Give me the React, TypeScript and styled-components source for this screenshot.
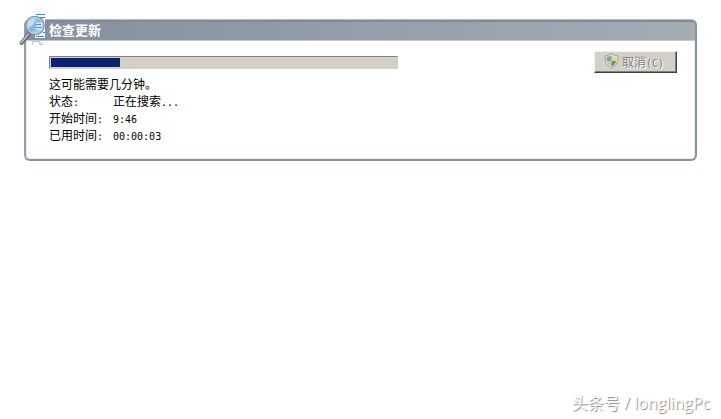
import React from "react";
import styled, { createGlobalStyle } from "styled-components";

const GlobalStyle = createGlobalStyle`
  * { box-sizing: border-box; }
  body {
    margin: 0;
    background: #fff;
    color: #000;
    font: 12px/17px "Noto Sans CJK SC", sans-serif;
  }
`;

const Page = styled.main`
  display: flex;
  flex-direction: column;
  min-height: 100vh;
  padding: 19px 24px 0;
`;

const Panel = styled.section`
  position: relative;
  border: 2px solid #87919f;
  border-top: 1px solid #b5bbc3;
  border-left-color: #949dab;
  border-radius: 6px;
  box-shadow: inset 0 0 0 1px #e8eaed;
`;

const Header = styled.header`
  height: 21px;
  padding-left: 23px;
  border-top: 2px solid #7f8b9b;
  border-bottom: 1px solid #c3c8ce;
  border-radius: 4px 4px 0 0;
  background: linear-gradient(90deg, #84909f, #a5abb3);
`;

const Title = styled.h1`
  margin: 0;
  color: #fff;
  font-size: 13px;
  line-height: 16px;
  font-weight: 700;
`;

const HeaderIcon = styled.svg`
  position: absolute;
  left: -8px;
  top: -8px;
  width: 32px;
  height: 36px;
`;

const Body = styled.div`
  display: flex;
  justify-content: space-between;
  align-items: flex-start;
  gap: 16px;
  padding: 10px 18px 16px 23px;
`;

const Status = styled.div`
  flex: 0 1 349px;
  min-width: 0;
  padding-top: 5px;
`;

const Track = styled.div`
  height: 13px;
  margin-bottom: 6px;
  padding: 1px;
  border: 1px solid #808080;
  border-right-color: #d4d0c8;
  border-bottom-color: #d4d0c8;
  background: #d4d0c8;
`;

const Fill = styled.div`
  height: 100%;
  background: #0a246a;
`;

const Note = styled.p`
  margin: 0;
`;

const Details = styled.dl`
  display: grid;
  grid-template-columns: 64px 1fr;
  grid-auto-rows: 17px;
  margin: 0;
`;

const Term = styled.dt``;

const Value = styled.dd`
  margin: 0;
`;

const Mono = styled.span`
  font-family: "DejaVu Sans Mono", monospace;
  font-size: 10px;
  line-height: 1;
`;

const CancelButton = styled.button`
  display: flex;
  flex: none;
  align-items: center;
  justify-content: center;
  gap: 3px;
  height: 22px;
  padding: 0 12px 2px 9px;
  border: 1px solid;
  border-color: #f4f2ee #404040 #404040 #f4f2ee;
  background: #d4d0c8;
  box-shadow: inset -1px -1px #808080;
  color: #808080;
  font: inherit;
  text-shadow: 1px 1px #fff;
`;

const ShieldIcon = styled.svg`
  width: 15px;
  height: 16px;
`;

const Watermark = styled.footer`
  align-self: flex-end;
  margin: auto -13px 4px 0;
  color: #fdfdfd;
  font: 16px/24px "Open Sans", "Noto Sans CJK SC", sans-serif;
  text-shadow: 1px 1px 1px #888;
`;

function SearchDocument() {
  return (
    <HeaderIcon viewBox="0 0 32 36" aria-hidden="true">
      <defs>
        <linearGradient id="lens" x1="0" y1="0" x2="1" y2="1">
          <stop offset="0" stopColor="#d5eaf8" />
          <stop offset=".5" stopColor="#86b3dc" />
          <stop offset="1" stopColor="#c7e5f5" />
        </linearGradient>
      </defs>
      <path d="M17 2h10v24H17z" fill="#fff" />
      <path d="M18 2.500h9M20 5.500h7M25 20.500h2M18 24.500h8" stroke="#4387c8" />
      <path d="M14.500 33v-3.500h7l3 3h-3v-3" fill="#fff" stroke="#c3c5c9" />
      <path d="M11 22 3.500 31" stroke="#64686b" strokeWidth="4" strokeLinecap="round" />
      <path d="M10.500 22 3 31" stroke="#c3c5c5" strokeWidth="1.500" strokeLinecap="round" />
      <circle cx="17" cy="13.500" r="9" fill="url(#lens)" stroke="#84909b" strokeWidth="1.500" />
      <circle cx="17" cy="13.500" r="8" fill="none" stroke="#c7dcea" />
      <path d="M18 10.500h6v7h-6z" fill="#eef7fc" opacity=".7" />
      <path d="M18 12.500h5M18 15.500h6" stroke="#4f93d0" />
      <path d="M10 15c0-5 3-8 7-8-2 4-1 7-7 8" fill="#fff" opacity=".45" />
    </HeaderIcon>
  );
}

function Shield() {
  return (
    <ShieldIcon viewBox="0 0 15 16" aria-hidden="true">
      <path d="M7.500.7C5.500 2.200 3.200 2.700 1 2.700c0 6 1.200 10 6.500 12.600C12.800 12.700 14 8.700 14 2.700c-2.200 0-4.500-.5-6.500-2z" fill="#e5e6df" stroke="#9ba2a5" />
      <path d="M7.500 2.300C6 3.300 4.300 3.900 2.500 4c0 1.500.1 2.800.4 4h4.600z" fill="#5fa9d3" />
      <path d="M7.500 2.300C9 3.300 10.700 3.900 12.500 4c0 1.500-.1 2.800-.4 4H7.500z" fill="#f2d469" />
      <path d="M2.900 8c.6 2.700 1.900 4.500 4.600 6V8z" fill="#edc653" />
      <path d="M12.100 8c-.6 2.700-1.900 4.500-4.600 6V8z" fill="#4b91c3" />
    </ShieldIcon>
  );
}

export default function App() {
  const progress = 20;
  return (
    <>
      <GlobalStyle />
      <Page>
        <Panel aria-labelledby="update-title">
          <Header>
            <Title id="update-title">检查更新</Title>
          </Header>
          <SearchDocument />
          <Body>
            <Status>
              <Track role="progressbar" aria-label="检查更新" aria-valuenow={progress} aria-valuemin={0} aria-valuemax={100}>
                <Fill style={{ width: `${progress}%` }} />
              </Track>
              <Note>这可能需要几分钟。</Note>
              <Details>
                <Term>状态<Mono>:</Mono></Term>
                <Value>正在搜索<Mono>...</Mono></Value>
                <Term>开始时间<Mono>:</Mono></Term>
                <Value><Mono>9:46</Mono></Value>
                <Term>已用时间<Mono>:</Mono></Term>
                <Value><Mono>00:00:03</Mono></Value>
              </Details>
            </Status>
            <CancelButton type="button" disabled>
              <Shield />
              <span>取消<Mono>(C)</Mono></span>
            </CancelButton>
          </Body>
        </Panel>
        <Watermark>头条号 / longlingPc</Watermark>
      </Page>
    </>
  );
}
